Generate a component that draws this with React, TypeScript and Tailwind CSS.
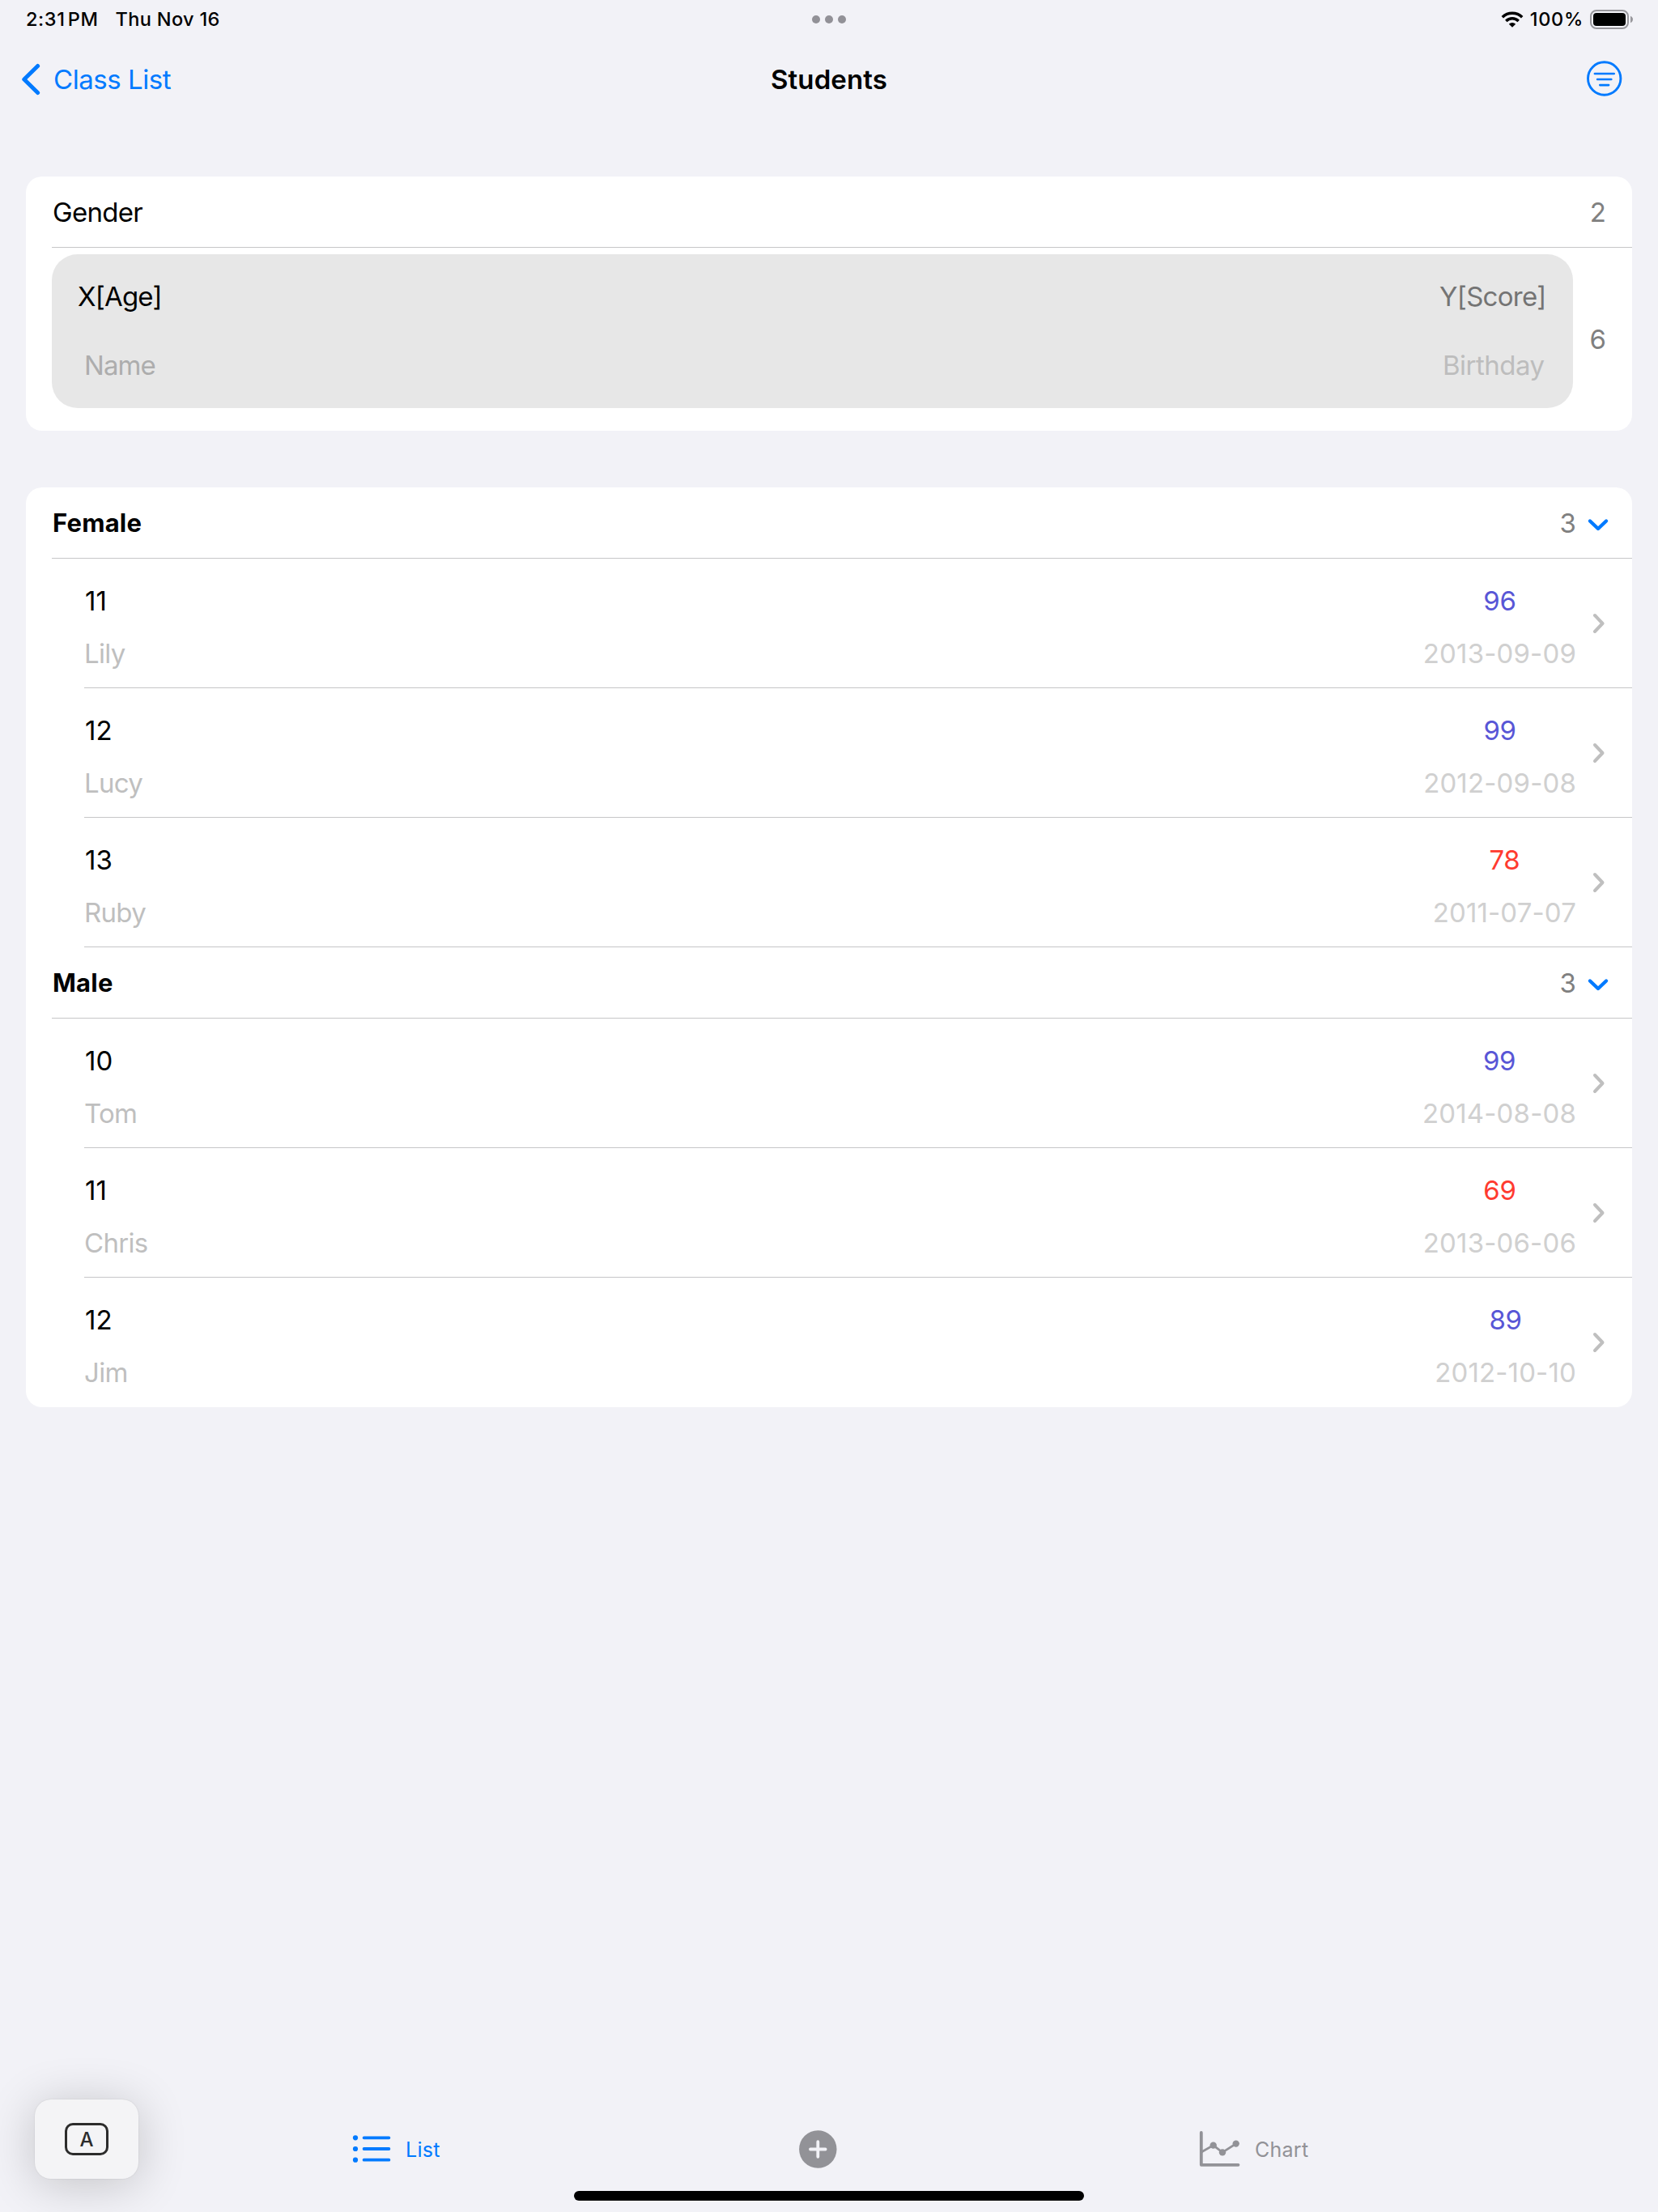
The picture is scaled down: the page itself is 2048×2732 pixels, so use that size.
import clsx from "clsx";

type Student = {
  age: number;
  name: string;
  score: number;
  birthday: string;
};

const groups: { gender: string; students: Student[] }[] = [
  {
    gender: "Female",
    students: [
      { age: 11, name: "Lily", score: 96, birthday: "2013-09-09" },
      { age: 12, name: "Lucy", score: 99, birthday: "2012-09-08" },
      { age: 13, name: "Ruby", score: 78, birthday: "2011-07-07" },
    ],
  },
  {
    gender: "Male",
    students: [
      { age: 10, name: "Tom", score: 99, birthday: "2014-08-08" },
      { age: 11, name: "Chris", score: 69, birthday: "2013-06-06" },
      { age: 12, name: "Jim", score: 89, birthday: "2012-10-10" },
    ],
  },
];

function StatusBar() {
  return (
    <div className="grid h-12 grid-cols-[1fr_auto_1fr] items-center px-[30px] text-[23.5px] font-medium leading-[47px]">
      <div className="flex h-12 pl-0.5">
        <span className="w-[110.5px] tracking-[0.6px] [word-spacing:-3.5px]">
          2:31 PM
        </span>
        <span className="tracking-[0.35px]">Thu Nov 16</span>
      </div>
      <div className="flex gap-1.5">
        <span className="size-2.5 rounded-full bg-[#929197]" />
        <span className="size-2.5 rounded-full bg-[#929197]" />
        <span className="size-2.5 rounded-full bg-[#929197]" />
      </div>
      <div className="flex h-12 items-center justify-end">
        <svg width="28" height="20" viewBox="0 0 28 20" fill="none" className="mr-2">
          <path d="M1.8 7.2A17.6 17.6 0 0 1 26.2 7.2" stroke="#000" strokeWidth="3.5" />
          <path d="M6.3 11.9A11.2 11.2 0 0 1 21.7 11.9" stroke="#000" strokeWidth="3.5" />
          <path d="M14 19.8L9.8 15.7A6 6 0 0 1 18.2 15.7Z" fill="#000" />
        </svg>
        <span className="mr-2 h-12 tracking-[0.7px]">100%</span>
        <svg width="54" height="24" viewBox="0 0 54 24">
          <rect x="1" y="1" width="46" height="22" rx="7" fill="none" stroke="#98979c" strokeWidth="2" />
          <rect x="4" y="4" width="40" height="16" rx="4" fill="#000" />
          <path d="M50 7.8C51.8 8.5 53 10.1 53 12S51.8 15.5 50 16.2Z" fill="#98979c" />
        </svg>
      </div>
    </div>
  );
}

function NavBar() {
  return (
    <div className="grid h-[100px] grid-cols-3 items-center pl-6 pr-11">
      <button className="flex items-center text-[#007aff]">
        <svg width="28" height="40" viewBox="0 0 28 40" fill="none" className="mr-3.5">
          <path d="M22.6 3.5L5.8 20L22.6 36.5" stroke="currentColor" strokeWidth="5" strokeLinecap="round" strokeLinejoin="round" />
        </svg>
        <span className="pt-0.5 tracking-[-0.45px]">Class List</span>
      </button>
      <h1 className="-ml-5 justify-self-center pl-10 pt-0.5 font-semibold tracking-[0.1px]">
        Students
      </h1>
      <svg width="44" height="44" viewBox="0 0 44 44" fill="none" className="-mt-0.5 justify-self-end text-[#007aff]">
        <circle cx="21.7" cy="22" r="20.2" stroke="currentColor" strokeWidth="2.9" />
        <path d="M9.9 16H33.7M13.1 23H30.3M16.3 30.1H27.1" stroke="currentColor" strokeWidth="2.6" strokeLinecap="round" />
      </svg>
    </div>
  );
}

function FieldsCard() {
  return (
    <section className="rounded-[20px] bg-white">
      <div className="ml-8 flex h-[88px] items-center justify-between border-b border-[#c6c6c8] pl-px pr-8 pt-0.5">
        <span className="tracking-[-0.7px]">Gender</span>
        <span className="text-[#808080]">2</span>
      </div>
      <div className="flex h-[226px] items-center pl-8 pr-8">
        <div className="-mt-5 h-[190px] flex-1 rounded-[32px] bg-[#e7e7e7] pl-8 pr-[33px] pt-8 leading-10">
          <div className="flex justify-between">
            <span className="tracking-[-0.8px]">X[Age]</span>
            <span className="tracking-[-0.7px] text-[#747474]">Y[Score]</span>
          </div>
          <div className="mt-[45px] flex justify-between pl-2 pr-0.5">
            <span className="tracking-[-0.9px] text-[#adadad]">Name</span>
            <span className="tracking-[-0.5px] text-[#bdbdbd]">Birthday</span>
          </div>
        </div>
        <span className="ml-[21px] pt-0.5 text-[#808080]">6</span>
      </div>
    </section>
  );
}

function StudentRow({ student, last }: { student: Student; last: boolean }) {
  return (
    <div
      className={clsx(
        "ml-[72px] flex h-40 justify-between pr-[34px] leading-10",
        !last && "border-b border-[#c6c6c8]"
      )}
    >
      <div className="flex flex-col gap-[25px] pt-8">
        <span className="pl-px">{student.age}</span>
        <span className="tracking-[-0.7px] text-[#bfbfbf]">{student.name}</span>
      </div>
      <div className="flex">
        <div className="flex flex-col items-center gap-[25px] pt-8">
          <span
            className={clsx(
              "tracking-[-0.4px]",
              student.score < 80 ? "text-[#ff3b30]" : "text-[#5856d6]"
            )}
          >
            {student.score}
          </span>
          <span className="tracking-[0.15px] text-[#d0d0d0]">{student.birthday}</span>
        </div>
        <svg width="16" height="26" viewBox="0 0 16 26" fill="none" className="ml-5 mt-[67px] -mr-px">
          <path d="M3 3L12.5 13L3 23" stroke="#bfbfbf" strokeWidth="4" strokeLinecap="round" strokeLinejoin="round" />
        </svg>
      </div>
    </div>
  );
}

function TabBar() {
  return (
    <nav className="flex h-12 items-center text-[25px] leading-[48px] text-[#929297]">
      <div className="ml-[435px] flex w-[552px] items-center text-[#007aff]">
        <svg width="48" height="36" viewBox="0 0 48 36" fill="none" className="mr-[18px]">
          <g fill="currentColor">
            <circle cx="4" cy="4.3" r="3.1" />
            <circle cx="4" cy="18" r="3.1" />
            <circle cx="4" cy="31.7" r="3.1" />
          </g>
          <path d="M14.6 4.3H45.4M14.6 18H45.4M14.6 31.7H45.4" stroke="currentColor" strokeWidth="3.8" strokeLinecap="round" />
        </svg>
        <span className="pt-0.5 tracking-[0.3px]">List</span>
      </div>
      <svg width="47" height="47" viewBox="0 0 47 47" fill="none">
        <circle cx="23.3" cy="23.5" r="23.2" fill="#929297" />
        <path d="M23.3 14.2V32.8M14 23.5H32.6" stroke="#f2f2f7" strokeWidth="3.8" strokeLinecap="round" />
      </svg>
      <div className="ml-[447px] flex items-center">
        <svg width="52" height="44" viewBox="0 0 52 44" fill="none" className="mr-[17px]">
          <path d="M2.8 2V41.8H48.5" stroke="currentColor" strokeWidth="3.8" strokeLinecap="round" strokeLinejoin="round" />
          <path d="M3 26L17.7 17.6L29 26.4L45.7 15.6" stroke="currentColor" strokeWidth="2.8" />
          <g fill="currentColor">
            <circle cx="17.7" cy="17.6" r="4.2" />
            <circle cx="29" cy="26.4" r="4.2" />
            <circle cx="45.7" cy="15.6" r="4.2" />
          </g>
        </svg>
        <span className="pt-0.5 tracking-[0.25px]">Chart</span>
      </div>
    </nav>
  );
}

export default function App() {
  return (
    <div className="relative flex h-[2732px] w-[2048px] flex-col overflow-hidden bg-[#f2f2f7] font-['Inter','Liberation_Sans',sans-serif] text-[33px] text-black">
      <StatusBar />
      <NavBar />
      <main className="mt-[70px] flex flex-1 flex-col gap-[70px] px-8">
        <FieldsCard />
        <section className="rounded-[20px] bg-white">
          {groups.map(({ gender, students }, g) => (
            <div key={gender}>
              <div className="ml-8 flex h-[88px] items-center border-b border-[#c6c6c8] pl-px pr-7 pt-0.5">
                <span className="flex-1 text-[31px] font-bold tracking-[0.2px]">{gender}</span>
                <span className="text-[#808080]">{students.length}</span>
                <svg width="28" height="18" viewBox="0 0 28 18" fill="none" className="ml-[13px] mt-0.5">
                  <path d="M4 4.5L14 14L24 4.5" stroke="#007aff" strokeWidth="4.4" strokeLinecap="round" strokeLinejoin="round" />
                </svg>
              </div>
              {students.map((student, i) => (
                <StudentRow
                  key={student.name}
                  student={student}
                  last={g === groups.length - 1 && i === students.length - 1}
                />
              ))}
            </div>
          ))}
        </section>
      </main>
      <TabBar />
      <div className="mx-auto mb-[14px] mt-7 h-3 w-[630px] rounded-full bg-black" />

      {/* floating input mode button */}
      <div className="absolute left-[43px] top-[2593px] flex h-[98px] w-32 items-center justify-center rounded-[20px] bg-[#f4f4f6] shadow-[0_6px_60px_rgba(0,0,0,0.2),0_0_2px_rgba(0,0,0,0.12)]">
        <div className="flex h-10 w-[54px] items-center justify-center rounded-[10px] border-3 border-[#2c2c2c] pt-px text-2xl font-medium leading-none text-[#2c2c2c]">
          A
        </div>
      </div>
    </div>
  );
}
